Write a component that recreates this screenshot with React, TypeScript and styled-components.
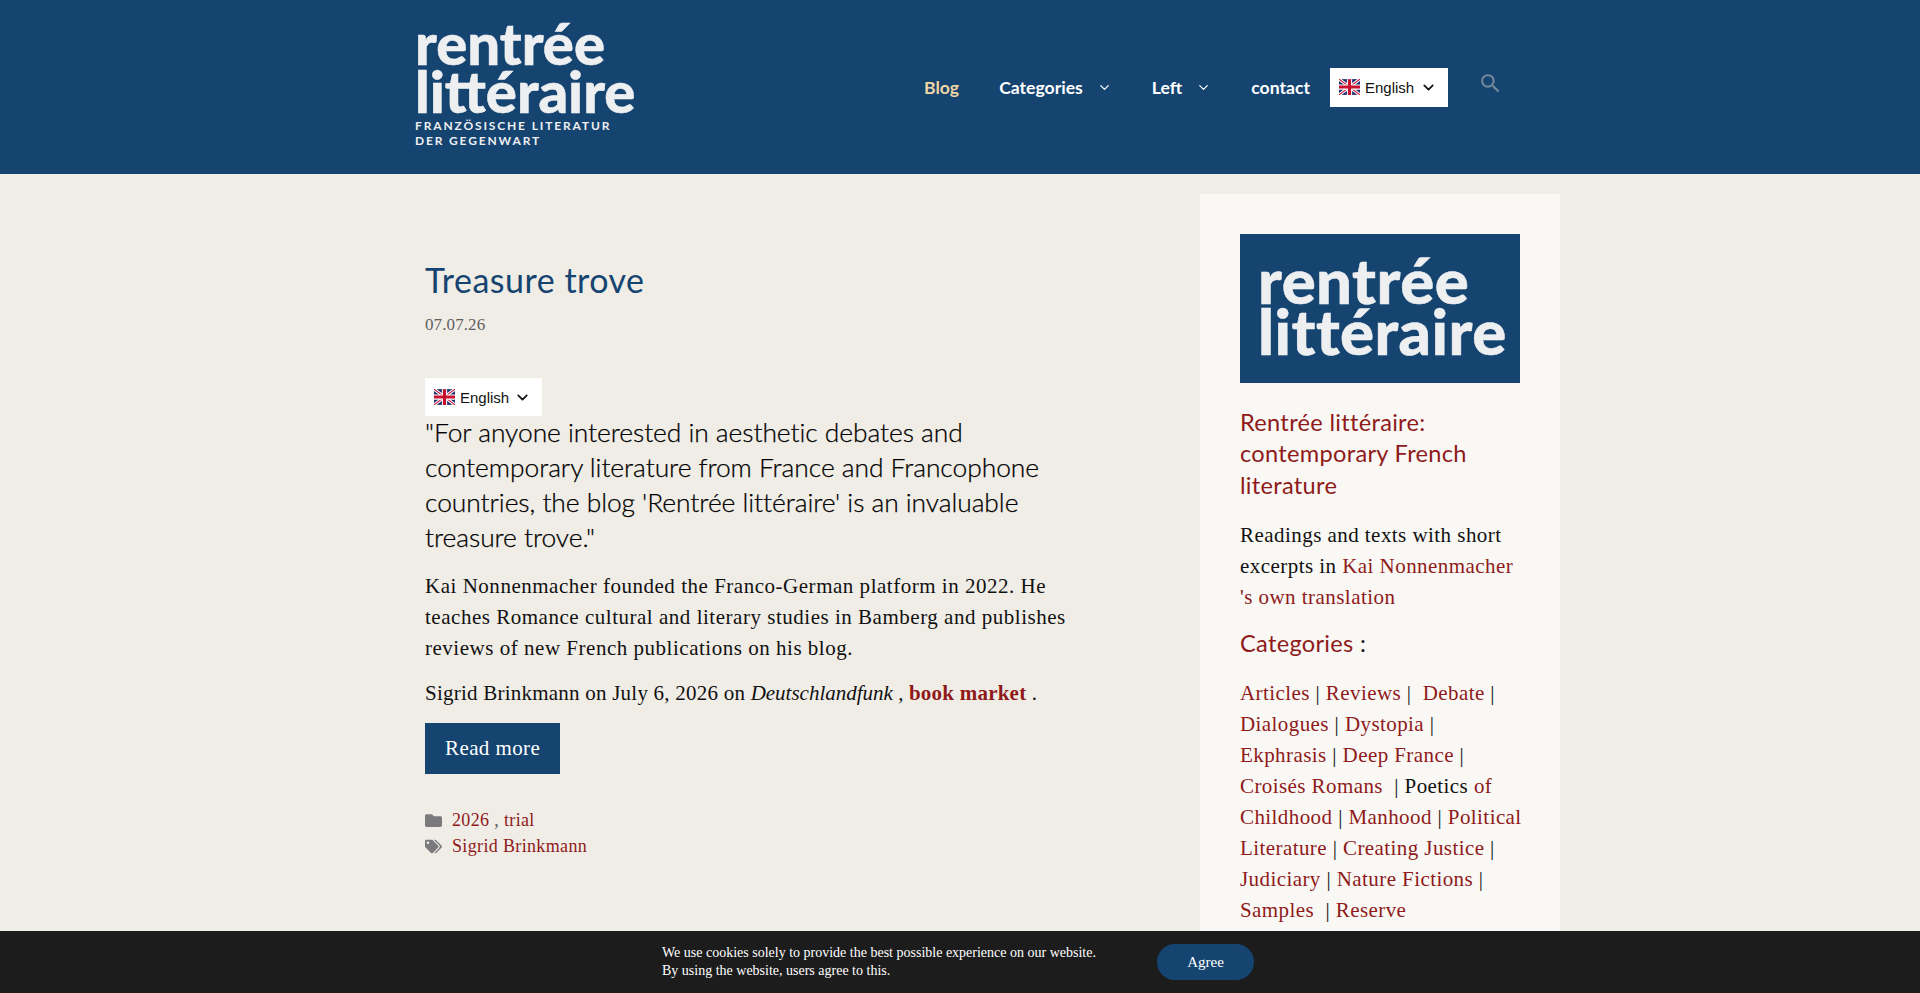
import React from 'react'
import styled, { createGlobalStyle } from 'styled-components'
import { ChevronDown } from 'lucide-react'
import { FaFolder, FaTags } from 'react-icons/fa'
import { MdSearch } from 'react-icons/md'

const NAVY = '#154471'
const RED = '#8f1a1a'
const SERIF = '"Liberation Serif", "Times New Roman", serif'
const HUMANIST = 'Lato, "Open Sans", sans-serif'

const GlobalStyle = createGlobalStyle`
  html, body {
    margin: 0;
    padding: 0;
    height: 993px;
    overflow: hidden;
    background: #f0ede7;
  }
  body {
    font-family: ${SERIF};
    color: #111;
  }
`

const Page = styled.div`
  height: 993px;
  overflow: hidden;
`

const Header = styled.header`
  height: 174px;
  background: ${NAVY};
`

const HeaderInner = styled.div`
  width: 1200px;
  height: 174px;
  margin: 0 auto;
  padding: 0 55px;
  box-sizing: border-box;
  display: flex;
  align-items: center;
  justify-content: space-between;
`

const Logo = styled.div`
  color: #eeeff1;
  font-family: ${HUMANIST};
  padding-bottom: 8px;
`

const LogoWord = styled.div<{ $size: number; $line: number }>`
  font-size: ${p => p.$size}px;
  font-weight: 900;
  line-height: ${p => p.$line}px;
  -webkit-text-stroke: 0.5px #eeeff1;
`

const LogoSub = styled.div`
  margin-top: 3px;
  font-size: 12px;
  font-weight: 700;
  line-height: 15px;
  letter-spacing: 1.85px;
`

const Nav = styled.nav`
  display: flex;
  align-items: center;
  margin-right: -2px;
`

const NavItem = styled.a<{ $active?: boolean; $gap: number }>`
  display: flex;
  align-items: center;
  margin-right: ${p => p.$gap}px;
  color: ${p => (p.$active ? '#eed6a4' : '#fff')};
  font-family: ${HUMANIST};
  font-size: 17.6px;
  font-weight: 700;
  svg {
    margin-left: 14px;
  }
`

const LangBox = styled.div<{ $width: number; $height: number }>`
  width: ${p => p.$width}px;
  height: ${p => p.$height}px;
  background: #fff;
  box-sizing: border-box;
  padding: 0 9px;
  display: flex;
  align-items: center;
  color: #111;
  font-family: "Liberation Sans", Arial, sans-serif;
  font-size: 15px;
  svg:first-child {
    margin-right: 5px;
    flex: none;
  }
  svg:last-child {
    margin-left: auto;
    margin-right: 2px;
  }
`

const SearchButton = styled.span`
  display: flex;
  margin-left: 30px;
  margin-right: 4px;
  margin-top: -7px;
  color: #73889b;
`

const Content = styled.div`
  width: 1200px;
  margin: 0 auto;
  padding-top: 20px;
  display: flex;
  gap: 30px;
  align-items: flex-start;
`

const Article = styled.article`
  width: 810px;
  box-sizing: border-box;
  padding: 59px 65px 60px;
`

const Title = styled.h1`
  margin: 0;
  color: ${NAVY};
  font-family: ${HUMANIST};
  font-size: 34px;
  font-weight: 400;
  line-height: 54px;
  letter-spacing: 0.5px;
`

const PostDate = styled.div`
  margin-top: 5px;
  color: #5f5f5f;
  font-size: 17px;
  line-height: 26px;
  letter-spacing: 0.1px;
`

const ArticleLang = styled.div`
  margin: 40px 0 -1px;
  width: 117px;
`

const Quote = styled.p`
  margin: 0;
  font-family: ${HUMANIST};
  font-size: 26.4px;
  font-weight: 300;
  line-height: 35px;
  letter-spacing: -0.05px;
  color: #000;
  -webkit-text-stroke: 0.25px #000;
`

const Para = styled.p<{ $spacing: number; $top: number }>`
  margin: ${p => p.$top}px 0 0;
  font-size: 21px;
  line-height: 31px;
  letter-spacing: ${p => p.$spacing}px;
  color: #111;
`

const Source = styled.em`
  letter-spacing: 0;
`

const Strong = styled.a`
  color: ${RED};
  font-weight: 700;
`

const ReadMore = styled.a`
  display: block;
  width: fit-content;
  margin-top: 14px;
  padding: 0 20px;
  height: 51px;
  line-height: 50px;
  background: ${NAVY};
  color: #fff;
  font-size: 21px;
  letter-spacing: 0.4px;
`

const Meta = styled.div`
  margin-top: 33px;
  font-size: 18px;
  line-height: 26px;
  letter-spacing: 0.35px;
  color: #555;
`

const MetaRow = styled.div`
  display: flex;
  align-items: center;
  gap: 10px;
  svg {
    color: #7a7a7c;
    flex: none;
  }
`

const Link = styled.a`
  color: ${RED};
`

const Sidebar = styled.aside`
  width: 360px;
  box-sizing: border-box;
  padding: 40px 40px 40px;
  background: #f9f8f5;
  font-size: 21px;
  line-height: 31px;
  letter-spacing: 0.45px;
`

const SideLogo = styled.div`
  height: 149px;
  box-sizing: border-box;
  padding: 0 0 8px 18px;
  background: ${NAVY};
  color: #eeeff1;
  font-family: ${HUMANIST};
  display: flex;
  flex-direction: column;
  justify-content: center;
`

const SideHeading = styled.h2<{ $top: number }>`
  margin: ${p => p.$top}px 0 0;
  color: ${RED};
  font-family: ${HUMANIST};
  font-size: 23.6px;
  font-weight: 400;
  line-height: 31.6px;
  letter-spacing: 0.3px;
`

const HeadingMark = styled.span`
  color: #111;
`

const SideText = styled.p<{ $top: number }>`
  margin: ${p => p.$top}px 0 0;
`

const CategoryList = styled(SideText)`
  letter-spacing: 0.42px;
  white-space: nowrap;
`

const Cookie = styled.div`
  position: fixed;
  left: 0;
  right: 0;
  bottom: 0;
  height: 62px;
  background: #1c1c1c;
  color: #fff;
  display: flex;
  align-items: center;
  padding-left: 662px;
  font-size: 14px;
  line-height: 18px;
`

const CookieText = styled.div`
  width: 495px;
`

const Agree = styled.button`
  width: 97px;
  height: 36px;
  border: 0;
  border-radius: 18px;
  background: ${NAVY};
  color: #fff;
  font-family: ${SERIF};
  font-size: 15px;
`

function Flag() {
  return (
    <svg width="21" height="16" viewBox="0 0 60 45">
      <rect width="60" height="45" fill="#1f2f6f" />
      <path d="M0 0 60 45M60 0 0 45" stroke="#fff" strokeWidth="9" />
      <path d="M0 0 60 45M60 0 0 45" stroke="#c8102e" strokeWidth="3" />
      <path d="M30 0V45M0 22.5H60" stroke="#fff" strokeWidth="15" />
      <path d="M30 0V45M0 22.5H60" stroke="#c8102e" strokeWidth="9" />
    </svg>
  )
}

function Lang({ width, height }: { width: number; height: number }) {
  return (
    <LangBox $width={width} $height={height}>
      <Flag />
      English
      <ChevronDown size={17} strokeWidth={2.4} />
    </LangBox>
  )
}

export default function App() {
  return (
    <Page>
      <GlobalStyle />
      <Header>
        <HeaderInner>
          <Logo>
            <LogoWord $size={58} $line={48}>rentrée</LogoWord>
            <LogoWord $size={58} $line={48}>littéraire</LogoWord>
            <LogoSub>
              FRANZÖSISCHE LITERATUR
              <br />
              DER GEGENWART
            </LogoSub>
          </Logo>
          <Nav>
            <NavItem $active $gap={40}>Blog</NavItem>
            <NavItem $gap={40}>
              Categories
              <ChevronDown size={15} />
            </NavItem>
            <NavItem $gap={40}>
              Left
              <ChevronDown size={15} />
            </NavItem>
            <NavItem $gap={20}>contact</NavItem>
            <Lang width={118} height={39} />
            <SearchButton>
              <MdSearch size={25} />
            </SearchButton>
          </Nav>
        </HeaderInner>
      </Header>
      <Content>
        <Article>
          <Title>Treasure trove</Title>
          <PostDate>07.07.26</PostDate>
          <ArticleLang>
            <Lang width={117} height={38} />
          </ArticleLang>
          <Quote>
            "For anyone interested in aesthetic debates and contemporary literature from France and
            Francophone countries, the blog 'Rentrée littéraire' is an invaluable treasure trove."
          </Quote>
          <Para $spacing={0.52} $top={15.5}>
            Kai Nonnenmacher founded the Franco-German platform in 2022. He teaches Romance cultural
            and literary studies in Bamberg and publishes reviews of new French publications on his
            blog.
          </Para>
          <Para $spacing={0.23} $top={14.5}>
            Sigrid Brinkmann on July 6, 2026 on <Source>Deutschlandfunk ,</Source>{' '}
            <Strong>book market</Strong> .
          </Para>
          <ReadMore>Read more</ReadMore>
          <Meta>
            <MetaRow>
              <FaFolder size={17} />
              <span>
                <Link>2026</Link> , <Link>trial</Link>
              </span>
            </MetaRow>
            <MetaRow>
              <FaTags size={17} />
              <Link>Sigrid Brinkmann</Link>
            </MetaRow>
          </Meta>
        </Article>
        <Sidebar>
          <SideLogo>
            <LogoWord $size={63.5} $line={51}>rentrée</LogoWord>
            <LogoWord $size={63.5} $line={51}>littéraire</LogoWord>
          </SideLogo>
          <SideHeading $top={23.5}>Rentrée littéraire: contemporary French literature</SideHeading>
          <SideText $top={18.5}>
            Readings and texts with short excerpts in <Link>Kai Nonnenmacher 's own translation</Link>
          </SideText>
          <SideHeading as="h3" $top={15}>
            Categories <HeadingMark>:</HeadingMark>
          </SideHeading>
          <CategoryList $top={19}>
            <Link>Articles</Link> | <Link>Reviews</Link> |&nbsp; <Link>Debate</Link> |<br />
            <Link>Dialogues</Link> | <Link>Dystopia</Link> |<br />
            <Link>Ekphrasis</Link> | <Link>Deep France</Link> |<br />
            <Link>Croisés Romans</Link>&nbsp; | Poetics <Link>of</Link>
            <br />
            <Link>Childhood</Link> | <Link>Manhood</Link> | <Link>Political</Link>
            <br />
            <Link>Literature</Link> | <Link>Creating Justice</Link> |<br />
            <Link>Judiciary</Link> | <Link>Nature Fictions</Link> |<br />
            <Link>Samples</Link>&nbsp; | <Link>Reserve</Link>
          </CategoryList>
        </Sidebar>
      </Content>
      <Cookie>
        <CookieText>
          We use cookies solely to provide the best possible experience on our website.
          <br />
          By using the website, users agree to this.
        </CookieText>
        <Agree>Agree</Agree>
      </Cookie>
    </Page>
  )
}
